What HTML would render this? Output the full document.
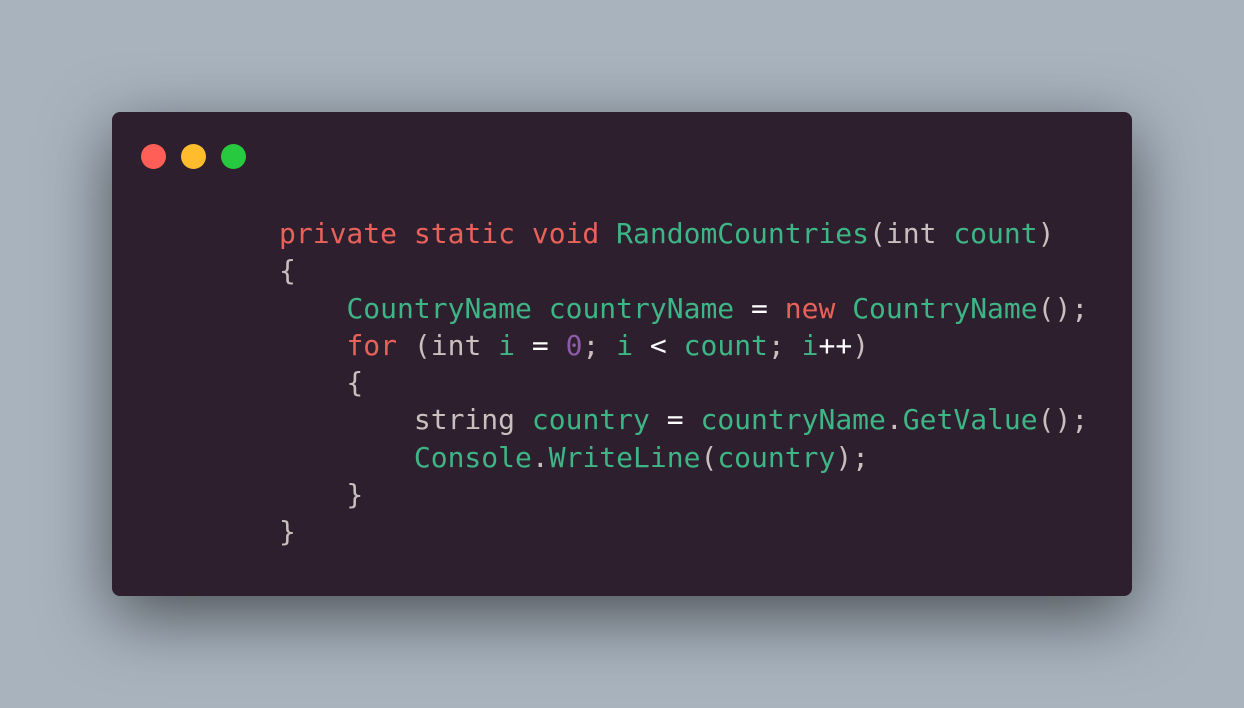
<!DOCTYPE html>
<html><head><style>
html,body{margin:0;padding:0;}
body{width:1244px;height:708px;background:#a8b3be;position:relative;overflow:hidden;}
.win{position:absolute;left:112px;top:112px;width:1020px;height:484px;background:#2e1f2f;border-radius:8px;box-shadow:0 20px 68px rgba(0,0,0,0.55);}
.dot{position:absolute;top:144px;width:25px;height:25px;border-radius:50%;}
pre{position:absolute;left:279px;top:215px;margin:0;font-family:"DejaVu Sans Mono","Liberation Mono",monospace;font-size:28px;line-height:37.3px;color:#c9bfbd;}
.k{color:#e9625a}.g{color:#3db585}.w{color:#ffffff}.p{color:#8d5ca7}
</style></head><body>
<div class="win"></div>
<div class="dot" style="left:141px;background:#ff5f56"></div>
<div class="dot" style="left:181px;background:#ffbd2e"></div>
<div class="dot" style="left:221px;background:#27c93f"></div>
<pre><span class="k">private static void</span> <span class="g">RandomCountries</span>(int <span class="g">count</span>)
{
    <span class="g">CountryName countryName</span> <span class="w">=</span> <span class="k">new</span> <span class="g">CountryName</span>();
    <span class="k">for</span> (int <span class="g">i</span> <span class="w">=</span> <span class="p">0</span>; <span class="g">i</span> <span class="w">&lt;</span> <span class="g">count</span>; <span class="g">i</span><span class="w">++</span>)
    {
        string <span class="g">country</span> <span class="w">=</span> <span class="g">countryName</span>.<span class="g">GetValue</span>();
        <span class="g">Console</span>.<span class="g">WriteLine</span>(<span class="g">country</span>);
    }
}</pre>
</body></html>
